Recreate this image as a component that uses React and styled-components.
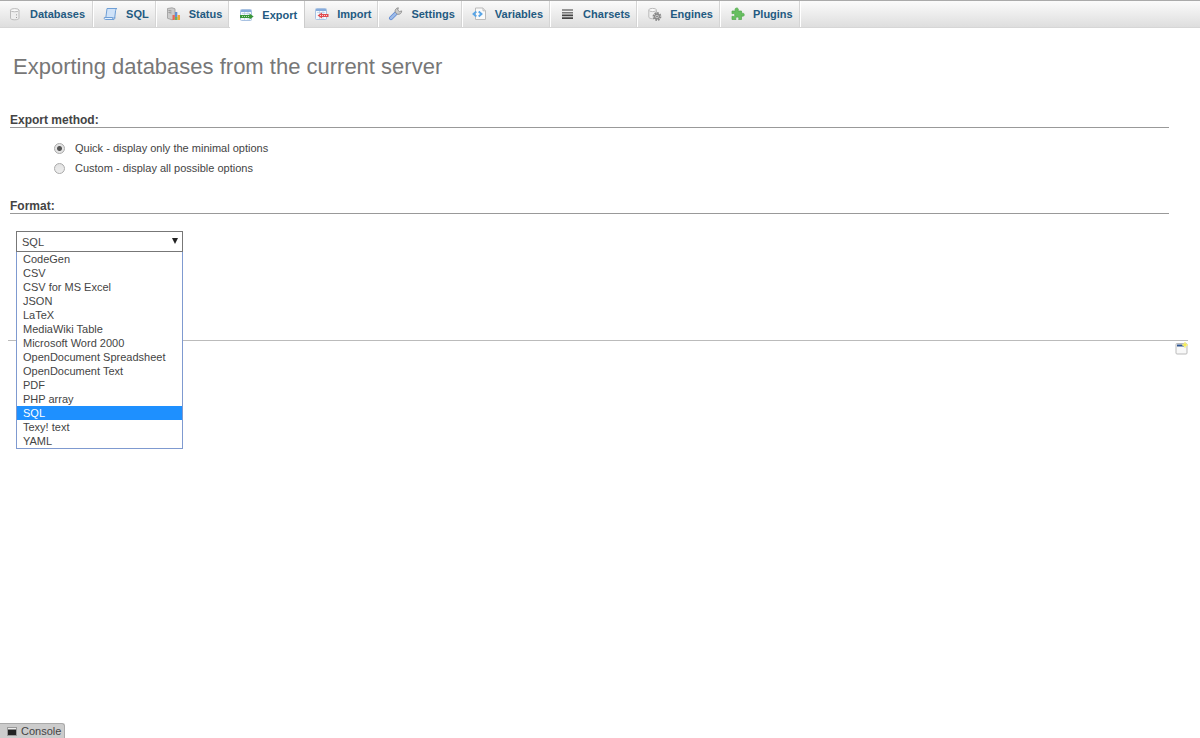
import React, { useState } from "react";
import styled, { createGlobalStyle } from "styled-components";

const GlobalStyle = createGlobalStyle`
  *, *::before, *::after { box-sizing: border-box; }
  body {
    margin: 0;
    background: #fff;
    color: #444;
    font-family: "Liberation Sans", Arial, sans-serif;
    font-size: 11px;
  }
`;

const Page = styled.div`
  min-height: 100vh;
  display: flex;
  flex-direction: column;
`;

const TabBar = styled.nav`
  display: flex;
  height: 28px;
  border-top: 1px solid #aaa;
  border-bottom: 1px solid #d6d6d6;
  background: linear-gradient(#fbfbfb, #dedede);
`;

const Tab = styled.a`
  display: flex;
  align-items: center;
  gap: 8px;
  height: ${(p) => (p.$active ? 27 : 26)}px;
  padding: 0 7px 0 9px;
  border-right: 1px solid ${(p) => (p.$active ? "#ccc" : "#fff")};
  box-shadow: inset -1px 0 0 ${(p) => (p.$active ? "#fff" : "#d5d5d5")};
  background: ${(p) => (p.$active ? "#fff" : "transparent")};
  color: #235a81;
  font-weight: bold;
  line-height: 16px;
  text-decoration: none;
  white-space: nowrap;

  &:first-child { padding: 0 8px 0 7px; }

  svg { flex: none; }
`;

const Main = styled.main`
  flex: 1;
  padding: 24px 12px 0 8px;
`;

const Title = styled.h1`
  margin: 0;
  padding-left: 5px;
  color: #777;
  font-size: 22px;
  font-weight: normal;
  line-height: 30px;
`;

const Section = styled.section`
  margin: ${(p) => (p.$first ? 31 : 21)}px 19px 0 2px;
`;

const SectionTitle = styled.h2`
  margin: 0;
  border-bottom: 1px solid #999;
  font-size: 12px;
  line-height: 14px;
  color: #444;
`;

const Choices = styled.div`
  display: flex;
  flex-direction: column;
  padding: 10px 0 0 44px;
`;

const Choice = styled.label`
  display: flex;
  align-items: center;
  gap: 10px;
  height: 20px;
`;

const Radio = styled.input`
  appearance: none;
  width: 11px;
  height: 11px;
  margin: 0;
  border: 1px solid #aaa;
  border-radius: 50%;
  background: linear-gradient(#e2e2e2, #eee);

  &:checked {
    background: radial-gradient(circle, #555 0 2px, #e4e4e4 3px);
  }
`;

const Picker = styled.div`
  position: relative;
  width: 167px;
  margin: 17px 0 0 6px;
`;

const FormatSelect = styled.select`
  appearance: none;
  display: block;
  width: 100%;
  height: 21px;
  margin: 0;
  padding: 0 20px 0 5px;
  border: 1px solid #777;
  border-radius: 0;
  background: transparent;
  color: #444;
  font: inherit;
  outline: none;
`;

const Arrow = styled.svg`
  position: absolute;
  top: 7px;
  right: 5px;
  pointer-events: none;
`;

const OptionList = styled.ul`
  position: absolute;
  top: 100%;
  left: 0;
  z-index: 1;
  width: 100%;
  margin: 0;
  padding: 0;
  border: 1px solid #7f9ad0;
  border-top-width: 0;
  background: #fff;
  list-style: none;
`;

const Option = styled.li`
  padding: 0 6px;
  background: ${(p) => (p.$selected ? "#1e90ff" : "transparent")};
  color: ${(p) => (p.$selected ? "#fff" : "#444")};
  line-height: 14px;
  cursor: default;
`;

const Footer = styled.footer`
  display: flex;
  justify-content: flex-end;
  margin-top: 88px;
  border-top: 1px solid #bbb;
`;

const NewWindow = styled.a`
  display: block;
  line-height: 0;
`;

const ConsoleBar = styled.div`
  display: flex;
`;

const ConsoleButton = styled.button`
  display: flex;
  align-items: center;
  gap: 4px;
  height: 15px;
  padding: 0 3px 0 7px;
  border: solid #aaa;
  border-width: 1px 1px 0 0;
  border-radius: 0 3px 0 0;
  background: #ccc;
  color: #444;
  font: inherit;
`;

function Icon({ children }) {
  return (
    <svg width="15" height="14" viewBox="0 0 15 14" aria-hidden="true">
      {children}
    </svg>
  );
}

const sheet = (
  <>
    <rect x="1.5" y="1.5" width="11" height="11" rx="1" fill="#f4f8fd" stroke="#a9c2e2" />
    <path d="M2 2h10v2H2z" fill="#86abdc" />
    <path d="M3 5.5h8M5.5 4v8M9 4v8" stroke="#b8cbe2" strokeWidth=".7" />
  </>
);

const icons = {
  databases: (
    <>
      <path d="M3.5 3.2v8c0 1 1.8 1.6 4.2 1.6s4.3-.6 4.3-1.6v-8" fill="#eee" stroke="#bbb" />
      <ellipse cx="7.7" cy="3.2" rx="4.3" ry="1.6" fill="#fafafa" stroke="#bbb" />
      <path d="M9.5 7.5v.8M9.5 10v.8" stroke="#888" />
    </>
  ),
  sql: (
    <>
      <path d="M4 1.5h10c-1 .4-1.300 1-1.400 2l-.9 7.500H2.800z" fill="#cfe2f8" stroke="#6f9fd6" />
      <path d="M1.300 10.500h8.200c0 1.300.5 2 1.300 2H2.400c-1 0-1.300-.8-1.100-2z" fill="#e7f1fc" stroke="#6f9fd6" />
      <path d="M10.800 12.500c.7-.2 1-.8 1.100-2" fill="none" stroke="#6f9fd6" />
    </>
  ),
  status: (
    <>
      <path d="M1.500 1.500 6 .8l3 1v10l-3 1-4.500-1.500z" fill="#ccc" stroke="#999" strokeWidth=".8" />
      <path d="M2.500 3.500l3 .5M2.500 5.500l3 .5" stroke="#888" strokeWidth=".8" />
      <path d="M6.500 8h2.300v5H6.500z" fill="#e66a55" />
      <path d="M9 5h2.300v8H9z" fill="#648fd2" />
      <path d="M11.500 8H14v5h-2.500z" fill="#f4a838" />
      <path d="M9 10h2.300v3H9z" fill="#6eb35b" />
    </>
  ),
  export: (
    <>
      {sheet}
      <path d="M1 7h9.500V5.500L14.700 8.500l-4.200 3V10H1z" fill="#39963a" />
      <path d="M3 8.500h7" stroke="#b9dfb4" strokeDasharray="1 1" />
    </>
  ),
  import: (
    <>
      {sheet}
      <path d="M14.500 7H8V5.500L3.500 8.500l4.500 3V10h6.500z" fill="#e04c50" />
      <path d="M6 8.500h8" stroke="#ffd2d0" strokeDasharray="1 1" />
    </>
  ),
  settings: (
    <>
      <path d="M3 11.200l4.800-4.800" stroke="#628bd0" strokeWidth="4" strokeLinecap="round" />
      <path d="M3 11.200l4.800-4.800" stroke="#9dbbe9" strokeWidth="2.400" strokeLinecap="round" />
      <path d="M7.200 5.200c-.6-2 .8-4.400 3.200-4.400L9.700 3l1.700 1.600 2.300-.7c.1 2.200-1.800 3.800-4.100 3.400z" fill="#ccc" stroke="#888" strokeWidth=".8" />
    </>
  ),
  variables: (
    <>
      <path d="M3.500 1h7.500l2.500 2.500v9H3.500z" fill="#fafafa" stroke="#bbb" />
      <path d="M11 1v2.800h2.500" fill="#eee" stroke="#bbb" />
      <path d="M4.300 4.500L1.500 7l2.800 2.500M6.700 4.500L9.500 7 6.700 9.500" fill="none" stroke="#5aa5e6" strokeWidth="1.900" />
    </>
  ),
  charsets: (
    <>
      <path d="M2 3h11M2 5.700h11" stroke="#777" strokeWidth="1.600" />
      <path d="M2 8.400h11M2 11.100h11" stroke="#444" strokeWidth="1.600" />
    </>
  ),
  engines: (
    <>
      <path d="M1.800 3v7c0 1 1.600 1.700 3.800 1.700s3.900-.7 3.900-1.700V3" fill="#eee" stroke="#bbb" />
      <ellipse cx="5.600" cy="3" rx="3.900" ry="1.600" fill="#fafafa" stroke="#bbb" />
      <circle cx="10" cy="9.500" r="3.500" fill="none" stroke="#888" strokeWidth="1.800" strokeDasharray="1.700 1" />
      <circle cx="10" cy="9.500" r="2.400" fill="#ccc" stroke="#888" strokeWidth="1.200" />
      <circle cx="10" cy="9.500" r=".8" fill="#777" />
    </>
  ),
  plugins: (
    <path
      d="M2 4h3.400C4.500 2 5.400 1 6.700 1s2.200 1 1.300 3h3.500v2.500c1.700-.8 2.700-.1 2.700 1.200s-1 2-2.700 1.200v3.600H8.600c.7-1.700-.1-2.500-1.300-2.500S5.300 10.800 6 12.500H2V9.200c2 .8 2.800 0 2.800-1.200S3.800 5.900 2 6.800z"
      fill="#67bf60"
      stroke="#50a84c"
      strokeWidth=".7"
    />
  ),
};

const tabs = [
  ["databases", "Databases"],
  ["sql", "SQL"],
  ["status", "Status"],
  ["export", "Export"],
  ["import", "Import"],
  ["settings", "Settings"],
  ["variables", "Variables"],
  ["charsets", "Charsets"],
  ["engines", "Engines"],
  ["plugins", "Plugins"],
];

const formats = [
  "CodeGen",
  "CSV",
  "CSV for MS Excel",
  "JSON",
  "LaTeX",
  "MediaWiki Table",
  "Microsoft Word 2000",
  "OpenDocument Spreadsheet",
  "OpenDocument Text",
  "PDF",
  "PHP array",
  "SQL",
  "Texy! text",
  "YAML",
];

function FormatPicker() {
  const [format, setFormat] = useState("SQL");
  const [open, setOpen] = useState(true);

  const toggle = (event) => {
    event.preventDefault();
    setOpen(!open);
  };

  const choose = (name) => {
    setFormat(name);
    setOpen(false);
  };

  return (
    <Picker>
      <FormatSelect
        aria-labelledby="format-title"
        value={format}
        onMouseDown={toggle}
        onChange={(event) => setFormat(event.target.value)}
      >
        {formats.map((name) => (
          <option key={name}>{name}</option>
        ))}
      </FormatSelect>
      <Arrow width="6" height="6" viewBox="0 0 6 6" aria-hidden="true">
        <path d="M0 0h6L3 6z" fill="#222" />
      </Arrow>
      {open && (
        <OptionList role="listbox" aria-labelledby="format-title">
          {formats.map((name) => (
            <Option
              key={name}
              role="option"
              aria-selected={name === format}
              $selected={name === format}
              onClick={() => choose(name)}
            >
              {name}
            </Option>
          ))}
        </OptionList>
      )}
    </Picker>
  );
}

export default function App() {
  return (
    <Page>
      <GlobalStyle />
      <TabBar>
        {tabs.map(([id, label]) => (
          <Tab key={id} href={`#${id}`} $active={id === "export"}>
            <Icon>{icons[id]}</Icon>
            {label}
          </Tab>
        ))}
      </TabBar>
      <Main>
        <Title>Exporting databases from the current server</Title>
        <Section $first>
          <SectionTitle id="method-title">Export method:</SectionTitle>
          <Choices role="radiogroup" aria-labelledby="method-title">
            <Choice>
              <Radio type="radio" name="method" value="quick" defaultChecked />
              Quick - display only the minimal options
            </Choice>
            <Choice>
              <Radio type="radio" name="method" value="custom" />
              Custom - display all possible options
            </Choice>
          </Choices>
        </Section>
        <Section>
          <SectionTitle id="format-title">Format:</SectionTitle>
          <FormatPicker />
        </Section>
        <Footer>
          <NewWindow href="#new-window" aria-label="Open new window">
            <svg width="13" height="14" viewBox="0 0 13 14" aria-hidden="true">
              <rect x="1" y="2.500" width="11" height="10.500" rx="1" fill="#f8f8f8" stroke="#bbb" />
              <path d="M2 3.500h7v2H2z" fill="#2e5590" />
              <path d="M10 1l.9 2 2 .9-2 .9-.9 2-.9-2-2-.9 2-.9z" fill="#f4ec4e" stroke="#f7f18a" strokeWidth=".8" />
            </svg>
          </NewWindow>
        </Footer>
      </Main>
      <ConsoleBar>
        <ConsoleButton type="button">
          <svg width="10" height="10" viewBox="0 0 10 10" aria-hidden="true">
            <rect x=".5" y="1.500" width="9" height="8" fill="#222" stroke="#999" />
            <path d="M1 2h8v1.500H1z" fill="#eee" />
          </svg>
          Console
        </ConsoleButton>
      </ConsoleBar>
    </Page>
  );
}
